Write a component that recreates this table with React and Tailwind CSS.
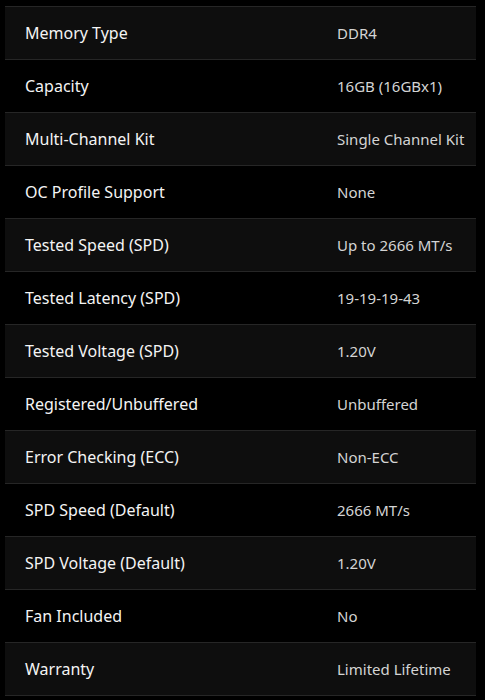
import React from 'react';

const specs = [
  ['Memory Type', 'DDR4'],
  ['Capacity', '16GB (16GBx1)'],
  ['Multi-Channel Kit', 'Single Channel Kit'],
  ['OC Profile Support', 'None'],
  ['Tested Speed (SPD)', 'Up to 2666 MT/s'],
  ['Tested Latency (SPD)', '19-19-19-43'],
  ['Tested Voltage (SPD)', '1.20V'],
  ['Registered/Unbuffered', 'Unbuffered'],
  ['Error Checking (ECC)', 'Non-ECC'],
  ['SPD Speed (Default)', '2666 MT/s'],
  ['SPD Voltage (Default)', '1.20V'],
  ['Fan Included', 'No'],
  ['Warranty', 'Limited Lifetime'],
];

const App = () => {
  return (
    <div className="min-h-[700px] bg-black px-[5px] pt-[6px] font-['Noto_Sans',sans-serif]">
      <div className="w-[471px] border-t border-[#262626]">
        {specs.map(([label, value], i) => (
          <div
            key={label}
            className={`flex h-[53px] items-center border-b border-[#262626] ${i % 2 === 0 ? 'bg-[#0e0e0e]' : 'bg-black'}`}
          >
            <span className="w-[332px] pl-[20px] text-[16px] text-[#f4f4f4]">{label}</span>
            <span className="text-[15px] text-[#d4d4d4]">{value}</span>
          </div>
        ))}
      </div>
    </div>
  );
};

export default App;
